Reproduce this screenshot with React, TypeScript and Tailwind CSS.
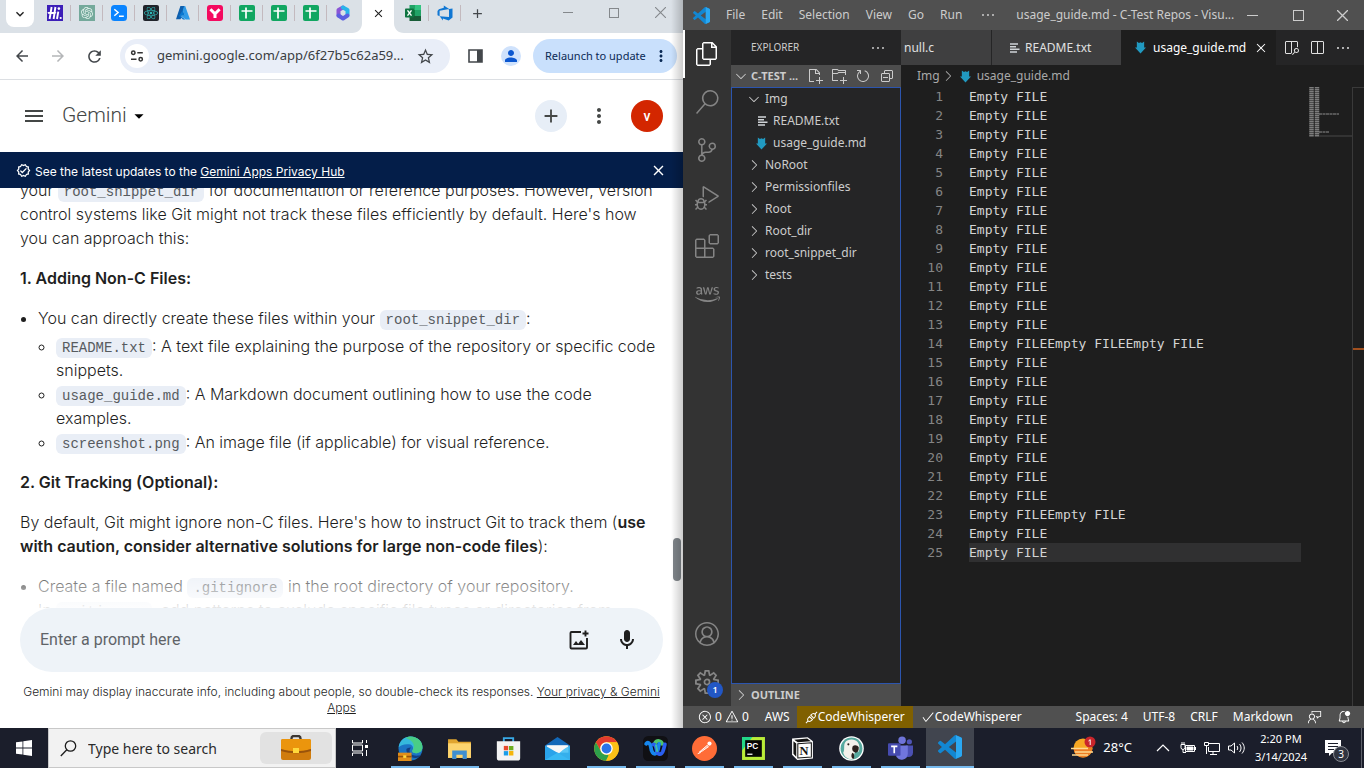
import type { ReactNode } from "react";
import {
  VscAccount, VscBellDot, VscCheck, VscChevronDown, VscChevronRight, VscClose, VscCollapseAll, VscDebugAlt,
  VscEllipsis, VscError, VscExtensions, VscFeedback, VscFiles, VscNewFile, VscNewFolder, VscOpenPreview,
  VscRefresh, VscSearch, VscSettingsGear, VscSourceControl, VscSplitHorizontal, VscWarning,
} from "react-icons/vsc";
import {
  MdAdd, MdArrowBack, MdArrowDropDown, MdArrowForward, MdClose, MdKeyboardArrowDown, MdMenu, MdMoreVert,
  MdOutlineMic, MdOutlineVerified, MdPerson, MdRefresh, MdStarBorder,
} from "react-icons/md";
import { FaAws, FaReact } from "react-icons/fa";
import { SiOpenai } from "react-icons/si";

const lines = Array.from({ length: 25 }, (_, i) =>
  "Empty FILE".repeat(i === 13 ? 3 : i === 22 ? 2 : 1)
);

/* ---------- Browser tab icons ---------- */

function HiIcon() {
  return (
    <svg viewBox="0 0 16 16" className="size-4">
      <rect width="16" height="16" fill="#3c1fb8" />
      <path d="M4.6 2 2.6 14M8.4 2 6.6 14M1 8.4C3 6 6 9.500 9 7.200M11.300 6.600 10 14" stroke="#fff" strokeWidth="1.900" fill="none" />
      <circle cx="11.900" cy="3.600" r="1.300" fill="#fff" />
      <circle cx="13.700" cy="13" r="1.100" fill="#fff" />
    </svg>
  );
}
function ChatIcon() {
  return (
    <span className="flex size-4 items-center justify-center bg-[#74a99b] text-[#e6f4ef]">
      <SiOpenai size={12} />
    </span>
  );
}
function TerminalIcon() {
  return (
    <svg viewBox="0 0 16 16" className="size-4">
      <rect width="16" height="16" rx="3.500" fill="#0a84ff" />
      <path d="m3.300 4.300 3.800 3.200-3.800 3.200M8 11.300h4.800" stroke="#fff" strokeWidth="1.500" fill="none" />
    </svg>
  );
}
function ReactIcon() {
  return (
    <span className="flex size-4 items-center justify-center rounded-xs bg-[#20232a] text-[#2fb8b8]">
      <FaReact size={14} />
    </span>
  );
}
function AzureIcon() {
  return (
    <svg viewBox="0 0 16 16" className="size-4">
      <path d="M5.400 1h4.400L5.600 14.200H1z" fill="#0f5fae" />
      <path d="m9 1.400 1.200-.400L15 14.400h-4.200L5 10.200h4.600L7.800 5z" fill="#2f9be8" />
      <path d="m7.800 5 2 5.400H4.800l5.600 4H8L4 11z" fill="#0a78d0" />
    </svg>
  );
}
function YIcon() {
  return (
    <svg viewBox="0 0 16 16" className="size-4">
      <rect width="16" height="16" rx="3" fill="#f40b60" />
      <path d="M3.400 4.200 8 8.800l4.600-4.600M8 8v5" stroke="#fff" strokeWidth="3" fill="none" />
    </svg>
  );
}
function SheetIcon() {
  return (
    <svg viewBox="0 0 16 16" className="size-4">
      <rect width="16" height="16" rx="2" fill="#11a661" />
      <path d="M2.500 6h11M7 2.500v11" stroke="#fff" strokeWidth="1.700" />
    </svg>
  );
}
function CopilotIcon() {
  return (
    <svg viewBox="0 0 16 16" className="size-4">
      <path d="M8 2.500 3.500 5v5.500" stroke="#8a55d6" strokeWidth="4" fill="none" strokeLinejoin="round" strokeLinecap="round" />
      <path d="m8 2.500 4.500 2.500v5" stroke="#28b4ea" strokeWidth="4" fill="none" strokeLinejoin="round" strokeLinecap="round" />
      <path d="m3.500 10.500 4.500 3 4.500-3" stroke="#5b5fe0" strokeWidth="4" fill="none" strokeLinejoin="round" strokeLinecap="round" />
    </svg>
  );
}
function ExcelIcon() {
  return (
    <svg viewBox="0 0 16 16" className="size-4">
      <path d="M4.500 0h6v5h-6z" fill="#21a366" />
      <path d="M10 0h6v5h-6z" fill="#33c481" />
      <path d="M4.500 5H10v6H4.500z" fill="#107c41" />
      <path d="M10 5h6v6h-6z" fill="#21a366" />
      <path d="M4.500 11H16v5H4.500z" fill="#185c37" />
      <rect y="3.500" width="9" height="9" rx=".8" fill="#0e7440" />
      <path d="m2.500 5.400 4 5.200M6.500 5.400l-4 5.200" stroke="#fff" strokeWidth="1.400" />
    </svg>
  );
}
function DevOpsIcon() {
  return (
    <svg viewBox="0 0 16 16" className="size-4">
      <path d="M15.500 3.500v9l-3.800 3-5.800-2v2L2.700 11.200l9.300.800V3.900zM12.200 3.900 6.800.500v2.300L1.900 4.200.5 6.100v4.200l2.100.900V5.800z" fill="#1077d3" />
    </svg>
  );
}

/* ---------- Shared logos ---------- */

function CodeLogo({ size }: { size: number }) {
  return (
    <svg viewBox="0 0 24 24" width={size} height={size} className="shrink-0" aria-hidden="true">
      <path d="M23.150 2.587 18.210.21a1.494 1.494 0 0 0-1.705.29l-9.460 8.630-4.120-3.128a.999.999 0 0 0-1.276.057L.327 7.261A1 1 0 0 0 .326 8.740L3.899 12 .326 15.260a1 1 0 0 0 .001 1.479L1.650 17.940a.999.999 0 0 0 1.276.057l4.120-3.128 9.460 8.630a1.492 1.492 0 0 0 1.704.290l4.942-2.377A1.500 1.500 0 0 0 24 20.060V3.939a1.500 1.500 0 0 0-.850-1.352zm-5.146 14.861L10.826 12l7.178-5.448v10.896z" fill="#1287d2" />
      <path d="M23.150 2.587 18.004.15v23.700l5.146-2.440A1.500 1.500 0 0 0 24 20.060V3.939a1.500 1.500 0 0 0-.850-1.352z" fill="#2aa8f2" />
    </svg>
  );
}
function MdFileIcon() {
  return (
    <svg viewBox="0 0 12 14" className="h-[13px] w-[11px] shrink-0" aria-hidden="true">
      <path d="M2 .5 4.300 2 6 1.200 7.700 2 10 .5V7h2l-6 6.500L0 7h2z" fill="#2199c0" />
    </svg>
  );
}
function TextFileIcon() {
  return (
    <svg viewBox="0 0 10 10" className="size-[10px] shrink-0" aria-hidden="true">
      <path d="M0 1h8M0 3.700h6M0 6.300h9.500M0 9h7" stroke="#d0d4d7" strokeWidth="1.400" />
    </svg>
  );
}

/* ---------- Browser window ---------- */

const tabIcons: [string, () => ReactNode][] = [
  ["Hi", HiIcon], ["ChatGPT", ChatIcon], ["Terminal", TerminalIcon], ["React", ReactIcon], ["Azure", AzureIcon],
  ["Y", YIcon], ["Sheet 1", SheetIcon], ["Sheet 2", SheetIcon], ["Sheet 3", SheetIcon], ["Copilot", CopilotIcon],
];

function Tab({ label, line = true, children }: { label: string; line?: boolean; children: ReactNode }) {
  return (
    <button aria-label={label} className="relative flex h-[26px] w-8 items-center justify-center">
      {children}
      {line && <span className="absolute top-[5px] right-0 h-4 w-px bg-[#c3b9be]" />}
    </button>
  );
}

function TabStrip() {
  return (
    <div className="flex h-[33px] items-start bg-[#dbe1e7] pl-[6px]">
      <button aria-label="Search tabs" className="mr-1 flex h-[27px] w-7 shrink-0 items-center justify-center rounded-b-lg bg-white">
        <MdKeyboardArrowDown size={16} className="text-[#1f1f1f]" />
      </button>
      <div className="ml-px flex">
        {tabIcons.map(([name, Icon], i) => (
          <Tab key={name} label={name} line={i < 9}>
            <Icon />
          </Tab>
        ))}
      </div>
      <div className="relative z-10 ml-[3px] flex h-[33px] w-8 shrink-0 justify-center bg-white">
        <svg viewBox="0 0 52 33" className="absolute -left-[10px] h-[33px] w-[52px] max-w-none" aria-hidden="true">
          <path d="M0 33c6 0 10-4 10-10V0h32v23c0 6 4 10 10 10z" fill="#fff" />
        </svg>
        <button aria-label="Close tab" className="relative flex h-[26px] items-center">
          <MdClose size={13} className="text-[#1f1f1f]" />
        </button>
      </div>
      <div className="ml-[3px] flex">
        <Tab label="Excel"><ExcelIcon /></Tab>
        <Tab label="Azure DevOps"><DevOpsIcon /></Tab>
        <Tab label="New tab" line={false}><MdAdd size={15} className="text-[#43474b]" /></Tab>
      </div>
      <div className="ml-auto flex h-[25px] text-[#84888c]">
        <button aria-label="Minimize" className="flex w-[46px] items-center justify-center">
          <span className="h-px w-[10px] bg-current" />
        </button>
        <button aria-label="Maximize" className="flex w-[46px] items-center justify-center">
          <span className="size-[10px] border border-current" />
        </button>
        <button aria-label="Close window" className="flex w-[46px] items-center justify-center">
          <svg viewBox="0 0 10 10" className="size-[11px]"><path d="m0 0 10 10M10 0 0 10" stroke="currentColor" /></svg>
        </button>
      </div>
    </div>
  );
}

function Toolbar() {
  return (
    <div className="flex h-[47px] items-center border-b border-[#dcdfe3] bg-white pr-[6px] pl-3 text-[#43474b]">
      <button aria-label="Back" className="flex w-5 justify-center"><MdArrowBack size={18} /></button>
      <button aria-label="Forward" className="ml-4 flex w-5 justify-center text-[#b4b6b8]"><MdArrowForward size={18} /></button>
      <button aria-label="Reload" className="ml-4 flex w-5 justify-center"><MdRefresh size={19} /></button>
      <div className="ml-4 flex h-[34px] min-w-0 flex-1 items-center rounded-full bg-[#e9eef8] pr-[15px] pl-[5px]">
        <button aria-label="Site information" className="flex size-6 shrink-0 items-center justify-center rounded-full bg-white">
          <svg viewBox="0 0 14 14" className="size-[14px]" fill="none" stroke="#333" strokeWidth="1.500">
            <circle cx="3.300" cy="3.700" r="1.700" /><path d="M7.300 3.700h5.500M1 10.300h5.500" /><circle cx="10.700" cy="10.300" r="1.700" />
          </svg>
        </button>
        <input
          aria-label="Address"
          readOnly
          value="gemini.google.com/app/6f27b5c62a59..."
          className="ml-2 min-w-0 flex-1 bg-transparent font-['Noto_Sans',sans-serif] text-[13px] text-[#3a3d42] outline-none"
        />
        <button aria-label="Bookmark"><MdStarBorder size={19} /></button>
      </div>
      <button aria-label="Side panel" className="ml-[18px]">
        <svg viewBox="0 0 15 14" className="h-[14px] w-[15px]"><path d="M1 1h13v12H1z" fill="none" stroke="#43474b" strokeWidth="1.600" /><path d="M9 1h5v12H9z" fill="#43474b" /></svg>
      </button>
      <button aria-label="Profile" className="ml-[18px] flex size-5 items-center justify-center rounded-full bg-[#cfe2fc] text-[#0b57d0]">
        <MdPerson size={18} />
      </button>
      <button className="ml-3 flex h-[34px] w-36 shrink-0 items-center justify-between rounded-full bg-[#c9e0fc] pr-[7px] pl-3 font-['Noto_Sans',sans-serif] text-[11px] whitespace-nowrap text-[#0b2a55]">
        Relaunch to update <MdMoreVert size={18} className="shrink-0" />
      </button>
    </div>
  );
}

function Code({ children }: { children: ReactNode }) {
  return (
    <code className="rounded-md bg-[#e9eef6] px-[6px] py-[2px] font-['Liberation_Mono',monospace] text-[14px] leading-none font-normal text-[#575b5f]">
      {children}
    </code>
  );
}

function Answer() {
  return (
    <div className="relative min-h-0 flex-1 overflow-hidden">
      <div className="-mt-[10px] flex flex-col gap-4 px-5 font-[Inter,sans-serif] text-[16px] leading-6 font-light whitespace-nowrap text-[#1f1f1f]">
        <p>
          your <Code>root_snippet_dir</Code> for documentation or reference purposes. However, version<br />
          control systems like Git might not track these files efficiently by default. Here's how<br />
          you can approach this:
        </p>
        <h2 className="font-semibold">1. Adding Non-C Files:</h2>
        <ul className="list-disc pl-[18px]">
          <li>
            You can directly create these files within your <Code>root_snippet_dir</Code>:
            <ul className="mt-1 list-[circle] pl-[18px]">
              <li><Code>README.txt</Code>: A text file explaining the purpose of the repository or specific code<br />snippets.</li>
              <li><Code>usage_guide.md</Code>: A Markdown document outlining how to use the code<br />examples.</li>
              <li><Code>screenshot.png</Code>: An image file (if applicable) for visual reference.</li>
            </ul>
          </li>
        </ul>
        <h2 className="font-semibold">2. Git Tracking (Optional):</h2>
        <p>
          By default, Git might ignore non-C files. Here's how to instruct Git to track them (<b className="font-semibold">use<br />
          with caution, consider alternative solutions for large non-code files</b>):
        </p>
        <ul className="list-disc pl-[18px]">
          <li>Create a file named <Code>.gitignore</Code> in the root directory of your repository.</li>
          <li>In <Code>.gitignore</Code>, add patterns to exclude specific file types or directories from</li>
        </ul>
      </div>
      <div className="absolute inset-x-0 bottom-0 h-12 bg-linear-to-b from-transparent to-white/90" />
      <div className="absolute right-[2px] bottom-[27px] h-[43px] w-2 rounded-full bg-[#80868b]" />
    </div>
  );
}

function Browser() {
  return (
    <section className="relative flex w-[683px] shrink flex-col overflow-hidden bg-white font-[Roboto,sans-serif]">
      <TabStrip />
      <Toolbar />
      <header className="flex h-[72px] items-center pr-5 pl-[22px] text-[#444746]">
        <button aria-label="Main menu"><MdMenu size={24} /></button>
        <button className="ml-4 flex items-center text-[21px] font-light text-[#444746]">
          Gemini <MdArrowDropDown size={22} className="ml-px text-black" />
        </button>
        <button aria-label="New chat" className="ml-auto flex size-8 items-center justify-center rounded-full bg-[#e7eef7]">
          <MdAdd size={22} />
        </button>
        <button aria-label="More" className="ml-5"><MdMoreVert size={24} /></button>
        <button className="ml-5 size-8 rounded-full bg-[#d32600] text-[14px] font-medium text-white">v</button>
      </header>
      <div className="flex h-9 items-center bg-[#041e49] px-4 text-white">
        <MdOutlineVerified size={15} />
        <p className="ml-1 flex-1 pt-1 font-[Inter,sans-serif] text-[12px] whitespace-nowrap">
          See the latest updates to the <a href="#privacy" className="underline">Gemini Apps Privacy Hub</a>
        </p>
        <button aria-label="Dismiss"><MdClose size={17} /></button>
      </div>
      <Answer />
      <div className="relative mx-5 flex h-16 shrink-0 items-center rounded-full bg-[#eef3f8] px-5 text-[#1f1f1f]">
        <input aria-label="Prompt" placeholder="Enter a prompt here" className="min-w-0 flex-1 bg-transparent text-[16px] outline-none placeholder:text-[#5f6368]" />
        <button aria-label="Upload image" className="mr-6">
          <svg viewBox="0 0 24 24" className="size-6" fill="none" stroke="currentColor" strokeWidth="1.900" aria-hidden="true">
            <path d="M14 4H4.500a1 1 0 0 0-1 1v14.500a1 1 0 0 0 1 1H19a1 1 0 0 0 1-1V10" />
            <path d="M18.500 2.500v6M15.500 5.500h6" />
            <path d="m6 17 3-4 2.200 2.800 2.800-3.800L18 17z" fill="currentColor" stroke="none" />
          </svg>
        </button>
        <button aria-label="Use microphone" className="mr-1"><MdOutlineMic size={24} /></button>
      </div>
      <p className="h-14 px-4 pt-3 text-center font-[Inter,sans-serif] text-[12px] leading-4 font-light whitespace-nowrap text-[#1f1f1f]">
        Gemini may display inaccurate info, including about people, so double-check its responses.{" "}
        <a href="#apps" className="underline">Your privacy &amp; Gemini<br />Apps</a>
      </p>
      <div className="pointer-events-none absolute inset-y-0 right-0 z-20 w-3 bg-linear-to-r from-transparent to-black/20" />
    </section>
  );
}

/* ---------- Code editor window ---------- */

function ActivityBar() {
  const item = "flex h-12 w-full items-center justify-center";
  return (
    <nav className="flex w-12 shrink-0 flex-col items-center bg-[#333333] text-[#858585]">
      <button aria-label="Explorer" className="flex h-12 w-full items-center justify-center border-l-2 border-white pr-[2px] text-white"><VscFiles size={24} /></button>
      <button aria-label="Search" className={item}><VscSearch size={24} /></button>
      <button aria-label="Source control" className={item}><VscSourceControl size={24} /></button>
      <button aria-label="Run and debug" className={item}><VscDebugAlt size={24} /></button>
      <button aria-label="Extensions" className={item}><VscExtensions size={24} /></button>
      <button aria-label="AWS" className={item}><FaAws size={25} /></button>
      <button aria-label="Accounts" className="mt-auto flex h-12 w-full items-center justify-center"><VscAccount size={24} /></button>
      <button aria-label="Manage" className="relative flex h-12 w-full items-center justify-center">
        <VscSettingsGear size={24} />
        <span className="absolute right-2 bottom-2 flex size-4 items-center justify-center rounded-full bg-[#2257c5] text-[9px] font-semibold text-white">1</span>
      </button>
    </nav>
  );
}

const folders = ["NoRoot", "Permissionfiles", "Root", "Root_dir", "root_snippet_dir", "tests"];

function Sidebar() {
  const row = "flex h-[22px] w-full items-center";
  return (
    <aside className="flex w-[170px] shrink-0 flex-col bg-[#252526] text-[12px] text-[#cccccc]">
      <div className="flex h-[35px] shrink-0 items-center justify-between pr-[15px] pl-5 text-[10px]">
        <h2>EXPLORER</h2>
        <button aria-label="Views and more actions"><VscEllipsis size={16} /></button>
      </div>
      <div className="flex h-[22px] shrink-0 items-center bg-[#4d4d4d] pr-[6px] pl-[2px] text-[11px] font-bold">
        <VscChevronDown size={16} />
        <span className="ml-[2px] flex-1 whitespace-nowrap">C-TEST ...</span>
        <div className="flex gap-2">
          <button aria-label="New file"><VscNewFile size={16} /></button>
          <button aria-label="New folder"><VscNewFolder size={16} /></button>
          <button aria-label="Refresh"><VscRefresh size={16} /></button>
          <button aria-label="Collapse"><VscCollapseAll size={16} /></button>
        </div>
      </div>
      <div className="flex-1 border border-[#2c55ae]">
        <button className={row + " pl-[14px]"}><VscChevronDown size={16} /><span className="ml-[3px]">Img</span></button>
        <button className={row + " pl-[26px]"}><TextFileIcon /><span className="ml-[5px]">README.txt</span></button>
        <button className={row + " pl-[24px]"}><MdFileIcon /><span className="ml-[6px]">usage_guide.md</span></button>
        {folders.map((f) => (
          <button key={f} className={row + " pl-[14px]"}><VscChevronRight size={16} /><span className="ml-[3px]">{f}</span></button>
        ))}
      </div>
      <button className="flex h-[22px] shrink-0 items-center bg-[#4d4d4d] pl-[2px] text-[11px] font-bold">
        <VscChevronRight size={16} /><span className="ml-[2px]">OUTLINE</span>
      </button>
    </aside>
  );
}

function Minimap() {
  return (
    <svg viewBox="0 0 43 50" className="h-[50px] w-[43px]" aria-hidden="true">
      <path d="M2.500 0v50M8 0v50" stroke="#7d7d7d" strokeWidth="4.500" strokeDasharray="1.500 .5" />
      <path d="M10 27h20M10 45h10" stroke="#8d8d8d" strokeDasharray="3 .5" />
      <path d="M10 49h33" stroke="#333" strokeWidth="2" />
    </svg>
  );
}

function Editor() {
  return (
    <main className="flex min-w-0 flex-1 flex-col bg-[#1e1e1e]">
      <div className="flex h-[35px] shrink-0 bg-[#252526] text-[12px] text-[#e0e0e0]">
        <button className="w-[91px] border-r border-[#252526] bg-[#3f3f40] pl-[3px] text-left">null.c</button>
        <button className="flex w-[129px] items-center gap-[5px] bg-[#3f3f40] pl-[18px]"><TextFileIcon />README.txt</button>
        <div className="flex w-[155px] items-center bg-[#1e1e1e] pl-[14px] text-white">
          <MdFileIcon /><span className="ml-[7px] flex-1">usage_guide.md</span>
          <button aria-label="Close file" className="mr-[7px]"><VscClose size={16} /></button>
        </div>
        <div className="flex flex-1 items-center justify-end gap-[10px] pr-[13px]">
          <button aria-label="Open preview"><VscOpenPreview size={16} /></button>
          <button aria-label="Split editor"><VscSplitHorizontal size={16} /></button>
          <button aria-label="More actions"><VscEllipsis size={16} /></button>
        </div>
      </div>
      <div className="flex h-[22px] shrink-0 items-center pl-4 text-[12px] text-[#a9a9a9]">
        Img<VscChevronRight size={16} /><span className="ml-1"><MdFileIcon /></span><span className="ml-[6px]">usage_guide.md</span>
      </div>
      <div className="flex min-h-0 flex-1">
        <ol className="min-w-0 flex-1 font-['DejaVu_Sans_Mono',monospace] text-[13px] leading-[19px]">
          {lines.map((t, i) => (
            <li key={i} className="flex">
              <span className="w-[42px] shrink-0 text-right text-[#858585]">{i + 1}</span>
              <span className={i === 24 ? "ml-[26px] flex-1 bg-[#303031] text-[#d4d4d4]" : "ml-[26px] flex-1 text-[#d4d4d4]"}>{t}</span>
            </li>
          ))}
        </ol>
        <div className="ml-2 w-[43px]"><Minimap /></div>
        <div className="w-3 border-t border-l border-[#3a3a3a]">
          <div className="mt-[260px] h-[2px] bg-[#a1501f]" />
        </div>
      </div>
    </main>
  );
}

function EditorWindow() {
  return (
    <section className="flex min-w-0 flex-1 flex-col font-['Noto_Sans',sans-serif]">
      <div className="flex h-[30px] shrink-0 items-center bg-[#505050] pl-[10px] text-[12px] text-[#cccccc]">
        <CodeLogo size={17} />
        <nav className="ml-4 flex shrink-0 gap-4">
          {["File", "Edit", "Selection", "View", "Go", "Run"].map((m) => <button key={m}>{m}</button>)}
          <button aria-label="More menus" className="ml-[2px]"><VscEllipsis size={16} /></button>
        </nav>
        <span className="ml-5 whitespace-nowrap">usage_guide.md - C-Test Repos - Visu...</span>
        <div className="ml-auto flex h-full shrink-0">
          <button aria-label="Minimize" className="flex w-10 items-center pl-3"><span className="h-px w-[11px] bg-current" /></button>
          <button aria-label="Maximize" className="flex w-[46px] items-center justify-center"><span className="size-[11px] border border-current" /></button>
          <button aria-label="Close" className="flex w-[43px] items-center justify-center">
            <svg viewBox="0 0 10 10" className="size-[11px]"><path d="m0 0 10 10M10 0 0 10" stroke="currentColor" strokeWidth="1.200" /></svg>
          </button>
        </div>
      </div>
      <div className="flex min-h-0 flex-1">
        <ActivityBar />
        <Sidebar />
        <Editor />
      </div>
      <footer className="flex h-[22px] shrink-0 items-center bg-[#505050] pl-[15px] text-[12px] whitespace-nowrap text-white">
        <button className="flex items-center gap-[3px]"><VscError size={14} />0 <VscWarning size={14} />0</button>
        <button className="ml-4">AWS</button>
        <button className="ml-[7px] flex h-full w-[116px] items-center justify-center bg-[#806000]">
          <svg viewBox="0 0 14 14" className="size-[13px]" fill="none" stroke="currentColor" strokeWidth="1.100">
            <path d="m1 13 2.300-2.300M13 1l-2.300 2.300M3.300 10.700C1.800 9 3 7.700 4.800 6l3.200 3.200c-1.700 1.800-3 3-4.700 1.500zM10.700 3.300C9 1.800 7.700 3 6.200 4.500l3.300 3.300C11 6.300 12.200 5 10.700 3.300z" />
          </svg>
          CodeWhisperer
        </button>
        <button className="ml-2 flex items-center"><VscCheck size={14} />CodeWhisperer</button>
        <div className="ml-auto flex items-center gap-[15px] pr-[13px]">
          <button>Spaces: 4</button><button>UTF-8</button><button>CRLF</button><button>Markdown</button>
          <button aria-label="Feedback"><VscFeedback size={14} /></button>
          <button aria-label="Notifications"><VscBellDot size={14} /></button>
        </div>
      </footer>
    </section>
  );
}

/* ---------- Taskbar ---------- */

function BriefcaseIcon() {
  return (
    <svg viewBox="0 0 32 26" className="h-[26px] w-8" aria-hidden="true">
      <path d="M11.500 5V3.500C11.500 1.500 12.500 1 14 1h4c1.500 0 2.500.500 2.500 2.500V5" stroke="#3b3632" strokeWidth="2.400" fill="none" />
      <rect x="1" y="4" width="30" height="21" rx="2" fill="#d07c0e" />
      <path d="M1 6a2 2 0 0 1 2-2h26a2 2 0 0 1 2 2v8c-10 3-20 3-30 0z" fill="#eb950d" />
      <path d="M1 14c10 3 20 3 30 0v2c-10 3-20 3-30 0z" fill="#99530b" />
      <rect x="13" y="13" width="6" height="5" fill="#ffd83b" />
    </svg>
  );
}
const svg = "size-[25px]";
function EdgeApp() {
  return (
    <svg viewBox="0 0 24 24" className={svg}>
      <circle cx="12" cy="12" r="11.500" fill="#1b74c4" />
      <path d="M.6 11C1.500 4 6.500.500 12 .500c7 0 11.500 5 11.500 10 0 4-3 6-6.500 6-3 0-4-1.500-3-3 .8-1 1-5-3.500-5.500C6 7.500 2 9 .6 11z" fill="#35b9dc" />
      <path d="M12 .500c7 0 11.500 5 11.500 10 0 4-3 6-6.500 6-3 0-4-1.500-3-3C17 10 15 4 7 2c1.500-1 3.500-1.500 5-1.500z" fill="#4fd270" opacity=".8" />
      <path d="M8 13c0 5 4 8 8.500 8 3 0 4.500-1 6-3-2 1-9 2-11-2-1-2 0-4 1-5-3 0-4.500 1-4.500 2z" fill="#123f82" />
      <rect y="16" width="13" height="8" fill="#e08d19" /><path d="M0 19h13v1.500H0z" fill="#96520b" /><path d="M5 18.500h3V21H5z" fill="#ffd83b" />
    </svg>
  );
}
function ExplorerApp() {
  return (
    <svg viewBox="0 0 24 24" className={svg}>
      <path d="M1 3h8l2 2.500h12V21H1z" fill="#e0a52f" /><path d="M1 7h22v14H1z" fill="#fcd46e" />
      <path d="M5 22v-8h14v8h-4v-4H9v4z" fill="#3f8fd0" />
    </svg>
  );
}
function StoreApp() {
  return (
    <svg viewBox="0 0 24 24" className={svg}>
      <path d="M7.500 6V2h9v4" fill="none" stroke="#38a9e6" strokeWidth="1.800" />
      <path d="M.8 5h22.400v16a2.500 2.500 0 0 1-2.500 2.500H3.300A2.500 2.500 0 0 1 .8 21z" fill="#f3f3f3" />
      <path d="M7.500 9.500h4.200v4.200H7.500z" fill="#e64a2e" /><path d="M12.500 9.500h4.200v4.200h-4.200z" fill="#6cae1f" />
      <path d="M7.500 14.500h4.200v4.200H7.500z" fill="#1a9de8" /><path d="M12.500 14.500h4.200v4.200h-4.200z" fill="#f5b50c" />
    </svg>
  );
}
function MailApp() {
  return (
    <svg viewBox="0 0 24 24" className={svg}>
      <path d="M0 9 12 1l12 8v14H0z" fill="#1268b8" /><path d="M1.500 9h21v7h-21z" fill="#f5f5f5" />
      <path d="M0 9v14h24z" fill="#2aa3ea" /><path d="M24 9v14H0z" fill="#3cbcf5" opacity=".85" /><path d="M2 9h20l-8.500 7.500z" fill="#f7f7f7" />
    </svg>
  );
}
function ChromeApp() {
  return (
    <svg viewBox="0 0 24 24" className={svg}>
      <circle cx="12" cy="12" r="11.800" fill="#fbc117" />
      <path d="M1.800 6A11.800 11.800 0 0 1 22.200 6H12a6 6 0 0 0-5.200 9z" fill="#e33b2e" />
      <path d="M1.800 6 6.800 15A6 6 0 0 0 12 18l2 .5-2.500 5.300A11.800 11.800 0 0 1 1.800 6z" fill="#2da04b" />
      <path d="M22.200 6H12a6 6 0 0 1 5.200 9l-5.500 8.800A11.800 11.800 0 0 0 22.200 6z" fill="#fbc117" />
      <circle cx="12" cy="12" r="6" fill="#fff" /><circle cx="12" cy="12" r="4.700" fill="#2a74e8" />
    </svg>
  );
}
function WebexApp() {
  return (
    <svg viewBox="0 0 24 24" className={svg}>
      <rect width="24" height="24" rx="5" fill="#101014" />
      <path d="M11.500 7c2-3.500 6-2.500 7 .5" stroke="#4fc36a" strokeWidth="3.600" fill="none" strokeLinecap="round" />
      <path d="M3 7.500c1.500-2 4-1 4.500 3 .5 4.500 2.500 8 5 6 2.500-2 2-6 3-9" stroke="#1687ef" strokeWidth="3.600" fill="none" strokeLinecap="round" />
      <path d="M10 8c3 0 2.500 4 3.500 7s4 3.500 5.500 0c1-2.500 1.500-5 2-7" stroke="#2a5ff0" strokeWidth="3.600" fill="none" strokeLinecap="round" />
      <path d="M12.500 9c.5 2 .7 4 1.200 5.500" stroke="#36bfae" strokeWidth="2" fill="none" strokeLinecap="round" />
    </svg>
  );
}
function PostmanApp() {
  return (
    <svg viewBox="0 0 24 24" className={svg}>
      <circle cx="12" cy="12" r="12" fill="#ff6c37" />
      <path d="m7 15.500 7.500-6.500 1.300 1.300-6 4.200zM5.500 17l3-1.200" stroke="#fff" strokeWidth=".9" fill="#ffb497" /><circle cx="16.800" cy="7.300" r="2" fill="#fff" />
    </svg>
  );
}
function PyCharmApp() {
  return (
    <svg viewBox="0 0 24 24" className={svg}>
      <path d="M1 1h22v22H1z" fill="#b9ec38" /><path d="M1 1h10L1 14z" fill="#21d789" /><path d="M4 4h16v16H4z" fill="#050505" />
      <path d="M6 17.500h5" stroke="#fff" strokeWidth="1.200" />
      <text x="5.500" y="12.500" fontSize="8" fontWeight="700" fontFamily="Liberation Sans" fill="#fff">PC</text>
    </svg>
  );
}
function NotionApp() {
  return (
    <svg viewBox="0 0 24 24" className={svg}>
      <path d="m2 2.500 15-1.200L22 5v16.500L7 23l-5-5z" fill="#fff" /><path d="m4 3.500 12.500-1L20 5 7.500 6zM3.300 5 6 7.200V20l-2.700-3z" fill="#151515" />
      <path d="m7.500 7.500 13-1v13.600l-13 1z" fill="#fff" stroke="#151515" />
      <text x="9" y="18.300" fontSize="12" fontWeight="700" fontFamily="Liberation Serif" fill="#151515">N</text>
    </svg>
  );
}
function BeaverApp() {
  return (
    <svg viewBox="0 0 24 24" className={svg}>
      <circle cx="12" cy="12" r="11.800" fill="#fff" /><circle cx="12" cy="12" r="10.500" fill="#57a99f" />
      <path d="M6 6c2-3 9-4 12 0 2 3 2 6 1 9-2-1-3-1-4 1s0 4-1 6c-5 1-9-2-10-6 2-3 0-7 2-10z" fill="#f3f1eb" />
      <path d="M13 10c2-2 5-1 6 1 0 3-1 5-3 5-3-1-4-3-3-6zM13 16c2 1 2 4 1 6-2 0-3-4-1-6z" fill="#2b211e" /><circle cx="9" cy="8" r="1" fill="#2b211e" />
    </svg>
  );
}
function TeamsApp() {
  return (
    <svg viewBox="0 0 24 24" className={svg}>
      <circle cx="13.500" cy="4" r="3.600" fill="#6f74d9" /><circle cx="20.500" cy="5.500" r="2.500" fill="#5055b8" />
      <path d="M17 9h7v7c0 3-3 5-6 4z" fill="#4b50b3" /><path d="M8 9h11v8a6 6 0 0 1-11 3z" fill="#7076dc" />
      <rect y="7" width="12" height="12" rx="1" fill="#464bb0" /><path d="M3 10h6M6 10v6.500" stroke="#fff" strokeWidth="1.600" />
    </svg>
  );
}

const apps: [string, ReactNode, boolean][] = [
  ["Edge", <EdgeApp />, true], ["File Explorer", <ExplorerApp />, true], ["Store", <StoreApp />, false],
  ["Mail", <MailApp />, false], ["Chrome", <ChromeApp />, true], ["Webex", <WebexApp />, true],
  ["Postman", <PostmanApp />, true], ["PyCharm", <PyCharmApp />, true], ["Notion", <NotionApp />, true],
  ["DBeaver", <BeaverApp />, true], ["Teams", <TeamsApp />, true],
];

function Taskbar() {
  return (
    <footer className="flex h-10 shrink-0 items-center bg-[#1b1e2b] font-['Noto_Sans',sans-serif] text-white">
      <button aria-label="Start" className="flex h-full w-12 shrink-0 items-center justify-center">
        <svg viewBox="0 0 16 16" className="size-4"><path d="M0 2.300 6.500 1.400v6.200H0zM7.300 1.300 16 0v7.600H7.300zM0 8.400h6.500v6.200L0 13.700zM7.300 8.400H16V16l-8.700-1.200z" fill="#fff" /></svg>
      </button>
      <div className="flex h-10 w-72 shrink-0 items-center border border-[#c8c8c8] bg-[#f2f2f2] pr-[3px] pl-[11px] text-[#1c1c1c]">
        <svg viewBox="0 0 17 17" className="size-[17px]" fill="none" stroke="#1c1c1c" strokeWidth="1.300"><circle cx="10.500" cy="6" r="5.200" /><path d="M6.800 9.800.8 16" /></svg>
        <input aria-label="Search" placeholder="Type here to search" className="ml-[11px] min-w-0 flex-1 bg-transparent text-[14px] outline-none placeholder:text-[#2b2b2b]" />
        <span className="flex h-8 w-[72px] items-center justify-center rounded-md bg-[#e2e2e2]"><BriefcaseIcon /></span>
      </div>
      <button aria-label="Task view" className="flex w-12 shrink-0 items-center justify-center">
        <svg viewBox="0 0 16 16" className="size-4" fill="none" stroke="#fff"><path d="M.5 0v3h10V0M.5 16v-3h10v3M.5 5h10v6H.5zM14.500 0v3M14.500 10v6" /><path d="M13 5h3v3h-3z" fill="#fff" stroke="none" /></svg>
      </button>
      <div className="ml-[2px] flex h-full">
        {apps.map(([name, icon, running]) => (
          <button key={name} aria-label={name} className="relative flex h-full w-[49px] items-center justify-center">
            {icon}
            {running && <span className="absolute inset-x-[5px] bottom-0 h-[2px] bg-[#76b9ed]" />}
          </button>
        ))}
        <button aria-label="Code editor" className="ml-px flex h-full w-12 items-center justify-center border-b-2 border-[#76b9ed] bg-[#41454f]"><CodeLogo size={24} /></button>
      </div>
      <div className="ml-auto flex h-full items-center">
        <svg viewBox="0 0 26 24" className="h-6 w-[26px]" aria-hidden="true">
          <circle cx="12" cy="12" r="9.500" fill="#f7a823" /><path d="M2.500 12a9.500 9.500 0 0 0 19 0z" fill="#ee7d22" />
          <path d="M0 12.500h17M4 16h18M1 19h16" stroke="#ffd98f" strokeWidth="1.500" />
          <circle cx="19" cy="6" r="5.500" fill="#c9252b" /><path d="m17.500 5 1.700-1.300V9" stroke="#fff" fill="none" />
        </svg>
        <span className="ml-[6px] text-[13px]">28°C</span>
        <div className="ml-6 flex items-center gap-2">
          <svg viewBox="0 0 13 8" className="h-2 w-[14px]"><path d="m.5 7 6-6 6 6" stroke="#fff" strokeWidth="1.200" fill="none" /></svg>
          <svg viewBox="0 0 16 14" className="ml-[2px] h-[14px] w-4" fill="none" stroke="#fff"><path d="M5.500 4.500h9v6h-9zM15.500 6v3M1 3.500h4v3a2 2 0 0 1-4 0zM2 1v2.500M4 1v2.500M3 8.500v3h3" /><path d="M7 6h6v3H7z" fill="#fff" /></svg>
          <svg viewBox="0 0 16 14" className="h-[14px] w-4" fill="none" stroke="#fff"><path d="M5 2.500h10.500v8H4.500V6M9 11v2.500M6 13.500h7M.5 1.500h4v3h-4zM2.500 5v8" /></svg>
          <svg viewBox="0 0 17 14" className="h-[14px] w-[17px]" fill="none" stroke="#fff"><path d="M.5 5h2.500L6.500 2v10L3 9H.5zM9 5c1 1.300 1 2.700 0 4M11.500 3c2 2.500 2 5.500 0 8M14 1.500c3 3.500 3 7.500 0 11" /></svg>
        </div>
        <div className="ml-2 w-[56px] text-center text-[11px] leading-[18px] whitespace-nowrap"><div>2:20 PM</div><div>3/14/2024</div></div>
        <button aria-label="Notifications" className="relative ml-4 flex h-full w-[30px] items-center">
          <svg viewBox="0 0 16 16" className="size-4"><path d="M0 0h16v13H7l-3 3v-3H0z" fill="#fff" /><path d="M3 3.500h10M3 6.500h10M3 9.500h6" stroke="#1b1e2b" strokeWidth="1.200" /></svg>
          <span className="absolute top-[18px] left-[8px] flex size-4 items-center justify-center rounded-full border border-[#888b92] bg-[#303440] text-[10px]">3</span>
        </button>
        <span className="ml-[6px] h-full w-px bg-[#5d606a]" />
        <span className="w-[2px]" />
      </div>
    </footer>
  );
}

export default function App() {
  return (
    <div className="flex h-screen flex-col overflow-hidden">
      <div className="flex min-h-0 flex-1">
        <Browser />
        <EditorWindow />
      </div>
      <Taskbar />
    </div>
  );
}
